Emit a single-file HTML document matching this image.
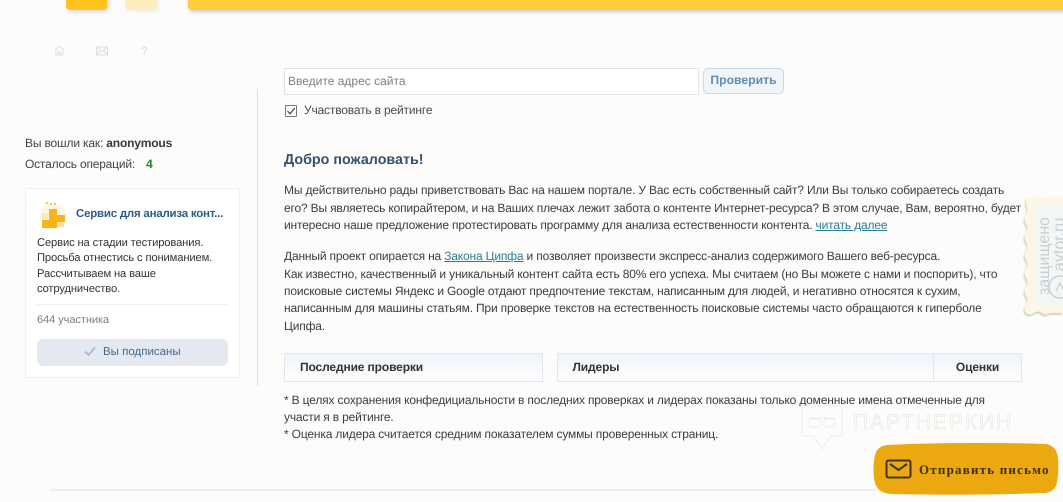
<!DOCTYPE html>
<html lang="ru">
<head>
<meta charset="utf-8">
<title>Проверка</title>
<style>
html,body{margin:0;padding:0}
body{width:1063px;height:502px;position:relative;overflow:hidden;background:#fdfcfb;font-family:"Liberation Sans",Arial,sans-serif;color:#3c3c3c;font-size:12.5px;text-rendering:geometricPrecision}
.a{position:absolute;white-space:nowrap}
.t{line-height:18px;font-size:12px;letter-spacing:-.17px;color:#3d3d3d;left:284px}
.th{position:absolute;top:353px;height:29px;box-sizing:border-box;border:1px solid #e2e5e9;background:linear-gradient(#eef3fb,#fff);font-weight:bold;font-size:12px;letter-spacing:-.13px;color:#333;line-height:27px}
a{color:#2a7f96;text-decoration:underline}
</style>
</head>
<body>
<div class="a" style="left:66px;top:-10px;width:41px;height:20px;background:#fec31e;border-radius:4px;box-shadow:2px 2px 4px rgba(0,0,0,.15)"></div>
<div class="a" style="left:125px;top:-10px;width:32px;height:20px;background:#feecbd;border-radius:4px;box-shadow:2px 2px 4px rgba(0,0,0,.06)"></div>
<div class="a" style="left:188px;top:-10px;width:890px;height:20px;background:#fecc3c;border-radius:4px;box-shadow:1px 2px 4px rgba(0,0,0,.2)"></div>

<svg class="a" style="left:54px;top:45px" width="11" height="11" viewBox="0 0 11 11" fill="none" stroke="#dedede" stroke-width="1"><path d="M.8 5.5 5.5 1l4.700 4.500M2 4.500V10h7V4.500M4.500 10V7h2v3"/></svg>
<svg class="a" style="left:96px;top:46px" width="12" height="10" viewBox="0 0 12 10" fill="none" stroke="#dedede" stroke-width="1"><rect x=".5" y="1" width="11" height="8"/><path d="M.5 1 6 5.500 11.500 1M.5 9 4.500 4.500M11.500 9 7.500 4.500"/></svg>
<div class="a" style="left:141px;top:44px;font-size:12px;font-weight:bold;color:#e2e2e2">?</div>

<div class="a" style="left:257px;top:89px;width:1px;height:297px;background:#dcdcdc"></div>

<div class="a" style="left:25px;top:136px;font-size:12px;letter-spacing:-.17px;line-height:15px;color:#444">Вы вошли как: <b style="color:#3a3a3a">anonymous</b></div>
<div class="a" style="left:25px;top:157px;font-size:12px;letter-spacing:-.2px;line-height:15px;color:#444">Осталось операций:</div>
<div class="a" style="left:146px;top:157px;font-size:12.2px;line-height:15px;font-weight:bold;color:#1d8a1d">4</div>

<div class="a" style="left:25px;top:188px;width:215px;height:190px;box-sizing:border-box;background:#fff;border:1px solid #eef0f3;border-radius:2px"></div>
<svg class="a" style="left:39px;top:200px" width="28" height="30" viewBox="0 0 28 30">
<circle cx="14" cy="16" r="13" fill="#fdf6e6"/>
<path d="M10 9h8v6h8v7h-8v6H3v-8h7z" fill="#fbb31a"/>
<rect x="18" y="22" width="7" height="5" fill="#fde3a2"/>
<rect x="3" y="13" width="6" height="6" fill="#fde9b8"/>
<path d="M6 2h3l-1 3zM11 3h2v2h-2zM15 3h2v2h-2z" fill="#f6c343"/>
</svg>
<div class="a" style="left:76px;top:207px;font-size:11.500px;letter-spacing:-.23px;line-height:15px;font-weight:bold;color:#2f5c88">Сервис для анализа конт...</div>
<div class="a" style="left:37px;top:236px;font-size:11.200px;letter-spacing:-.13px;line-height:15.400px;color:#333">Сервис на стадии тестирования.<br>Просьба отнестись с пониманием.<br>Рассчитываем на ваше<br>сотрудничество.</div>
<div class="a" style="left:37px;top:304px;width:191px;height:1px;background:#eff0f2"></div>
<div class="a" style="left:37px;top:313px;font-size:11px;letter-spacing:-.05px;line-height:14px;color:#7d7d7d">644 участника</div>
<div class="a" style="left:37px;top:339px;width:191px;height:27px;background:#e4e9f1;border-radius:6px"></div>
<svg class="a" style="left:84px;top:346px" width="12" height="11" viewBox="0 0 12 11" fill="none" stroke="#a3b1c1" stroke-width="1.500"><path d="M1 5.500 4.500 9 11 1.500"/></svg>
<div class="a" style="left:103px;top:344.500px;font-size:11.500px;line-height:14px;color:#44688f">Вы подписаны</div>

<div class="a" style="left:284px;top:68px;width:415px;height:27px;box-sizing:border-box;background:#fff;border:1px solid #dfe3e6"></div>
<div class="a" style="left:288px;top:74px;font-size:12px;line-height:15px;color:#808080">Введите адрес сайта</div>
<div class="a" style="left:703px;top:68px;width:81px;height:26px;box-sizing:border-box;background:#f2f5f8;border:1px solid #c3dcef;border-radius:5px;text-align:center;font-weight:bold;font-size:12.200px;line-height:23px;color:#5b8fb6">Проверить</div>

<div class="a" style="left:285px;top:105px;width:12px;height:12px;box-sizing:border-box;background:#fff;border:1px solid #777;border-radius:1px"></div>
<svg class="a" style="left:285px;top:105px" width="12" height="12" viewBox="0 0 12 12" fill="none" stroke="#444" stroke-width="1.200"><path d="M2.500 6 5 8.800 9.800 3"/></svg>
<div class="a" style="left:304px;top:103px;font-size:12px;letter-spacing:-.17px;line-height:15px;color:#4a4a4a">Участвовать в рейтинге</div>

<div class="a" style="left:284px;top:152px;font-size:14.300px;line-height:17px;font-weight:bold;color:#34506b">Добро пожаловать!</div>

<div class="a t" style="top:181px">Мы действительно рады приветствовать Вас на нашем портале. У Вас есть собственный сайт? Или Вы только собираетесь создать</div>
<div class="a t" style="top:199px">его? Вы являетесь копирайтером, и на Ваших плечах лежит забота о контенте Интернет-ресурса? В этом случае, Вам, вероятно, будет</div>
<div class="a t" style="top:216px">интересно наше предложение протестировать программу для анализа естественности контента. <a href="#">читать далее</a></div>
<div class="a t" style="top:247px">Данный проект опирается на <a href="#">Закона Ципфа</a> и позволяет произвести экспресс-анализ содержимого Вашего веб-ресурса.</div>
<div class="a t" style="top:265px">Как известно, качественный и уникальный контент сайта есть 80% его успеха. Мы считаем (но Вы можете с нами и поспорить), что</div>
<div class="a t" style="top:282px">поисковые системы Яндекс и Google отдают предпочтение текстам, написанным для людей, и негативно относятся к сухим,</div>
<div class="a t" style="top:299px">написанным для машины статьям. При проверке текстов на естественность поисковые системы часто обращаются к гиперболе</div>
<div class="a t" style="top:317px">Ципфа.</div>

<div class="th" style="left:284px;width:259px;padding-left:15px">Последние проверки</div>
<div class="th" style="left:557px;width:377px;padding-left:14.500px">Лидеры</div>
<div class="th" style="left:933px;width:89px;text-align:center">Оценки</div>

<div class="a t" style="top:390.500px">* В целях сохранения конфедициальности в последних проверках и лидерах показаны только доменные имена отмеченные для</div>
<div class="a t" style="top:408px">участи я в рейтинге.</div>
<div class="a t" style="top:425px">* Оценка лидера считается средним показателем суммы проверенных страниц.</div>

<svg class="a" style="left:1020px;top:195px" width="43" height="125" viewBox="0 0 43 125">
<defs><filter id="b" x="-20%" y="-20%" width="140%" height="140%"><feGaussianBlur stdDeviation=".9"/></filter></defs>
<path d="M6 2q4 3 8 0t8 0 8 0 13 0V118H30q-4 3-8 0t-8 0-8 0q-3-4 0-8t0-9 0-9 0-9 0-9 0-9 0-9 0-9 0-9 0-9 0-9 0-10z" fill="#a8a8a8" opacity=".5" filter="url(#b)" transform="translate(-1 2)"/>
<path d="M6 2q4 3 8 0t8 0 8 0 13 0V118H30q-4 3-8 0t-8 0-8 0q-3-4 0-8t0-9 0-9 0-9 0-9 0-9 0-9 0-9 0-9 0-9 0-9 0-10z" fill="#fcf6e3"/>
<rect x="13" y="8" width="30" height="102" fill="#f3f6f3"/>
<text transform="translate(29 100) rotate(-90)" font-family="Liberation Sans,sans-serif" font-size="16" fill="#c4d1d6">защищено</text>
<text transform="translate(44 76) rotate(-90)" font-family="Liberation Sans,sans-serif" font-size="16" fill="#c4d1d6">avtor.ru</text>
<circle cx="40" cy="92" r="11" fill="#f3f6f3" stroke="#c4d1d6" stroke-width="1.500"/>
<path d="M36 96l4-8 4 8" fill="none" stroke="#c4d1d6" stroke-width="1.300"/>
</svg>

<svg class="a" style="left:801px;top:405px" width="212" height="46" viewBox="0 0 212 46" fill="none" stroke="#ececea" stroke-width="1">
<path d="M1 1h40v30H30L21 44l-8-13H1z"/>
<rect x="8" y="14" width="11" height="8" rx="2"/><rect x="23" y="14" width="11" height="8" rx="2"/><path d="M8 13h26"/>
<text x="52" y="24" font-family="Liberation Sans,sans-serif" font-size="21" fill="#fdfcfb" stroke="#e8e8e6" stroke-width=".7" textLength="158">ПАРТНЕРКИН</text>
</svg>

<div class="a" style="left:50px;top:489px;width:830px;height:2px;background:#eeeeec"></div>

<svg class="a" style="left:873px;top:442px" width="186" height="54" viewBox="0 0 186 54"><path d="M14 3C60 .5 130 .5 172 2c8 .5 12 6 13 14 .5 8 .5 16-1 24-1 7-6 11-14 11C120 53 60 53 20 52 8 52 2 46 1 36 0 28 .5 20 2 13 3.500 7 8 3.500 14 3z" fill="#eba80f"/></svg>
<svg class="a" style="left:885px;top:459px" width="28" height="21" viewBox="0 0 28 21" fill="none" stroke="#40341a" stroke-width="2"><rect x="1.500" y="1.500" width="24" height="17" rx="2"/><path d="M5 5l8.500 6L22 5"/></svg>
<div class="a" style="left:919px;top:462px;font-family:'Liberation Serif',serif;font-weight:bold;font-size:13px;line-height:16px;letter-spacing:1.200px;color:#3f3218">Отправить письмо</div>
</body>
</html>
